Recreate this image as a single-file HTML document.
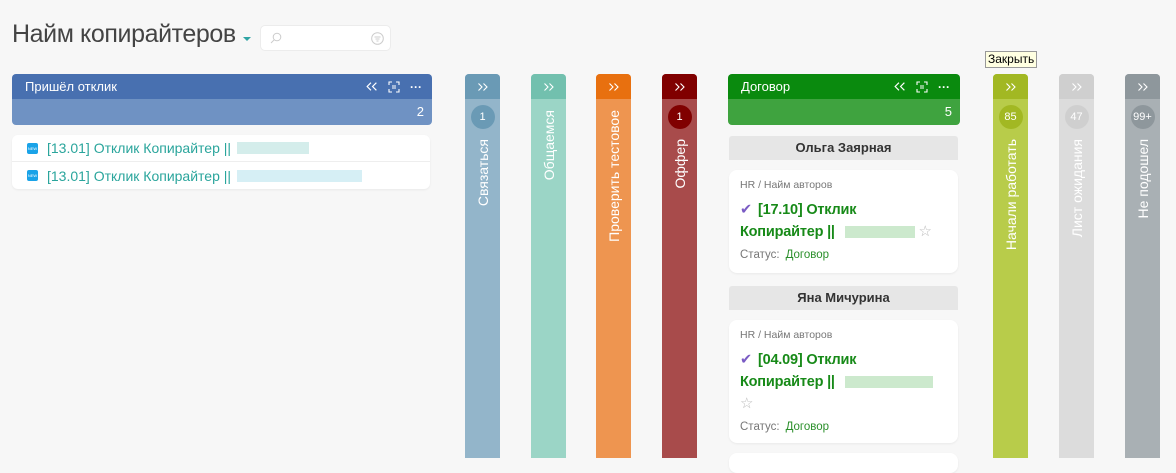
<!DOCTYPE html>
<html><head><meta charset="utf-8"><style>
*{box-sizing:border-box;margin:0;padding:0}
body{width:1176px;height:458px;overflow:hidden;background:#f7f7f7;font-family:"Segoe UI","Liberation Sans","DejaVu Sans",sans-serif;position:relative;color:#333}
.abs{position:absolute}
.title{left:12px;top:20px;font-size:25px;color:#444;letter-spacing:-0.4px}
.caret{left:243px;top:37px;width:0;height:0;border-left:4px solid transparent;border-right:4px solid transparent;border-top:4px solid #2fa4a4}
.search{left:260px;top:25px;width:131px;height:26px;background:#fff;border-radius:5px;border:1px solid #ececec}
.col{border-radius:4px 4px 0 0;overflow:hidden}
.hd{height:25px;color:#fff;font-size:13px;display:flex;align-items:center;padding:0 0 0 13px}
.sub{height:26px;color:#fff;font-size:13px;text-align:right;padding:5px 8px 0 0}
.icons{margin-left:auto;display:flex;gap:10px;align-items:center;padding-right:10px}
.cc{width:35px;top:74px;height:384px;border-radius:4px 4px 0 0;overflow:hidden}
.cc .h{height:25px;display:flex;align-items:center;justify-content:center}
.cc .circ{width:24px;height:24px;border-radius:50%;margin:6px auto 0;color:#fff;font-size:11px;text-align:center;line-height:24px}
.cc .vt{writing-mode:vertical-rl;transform:rotate(180deg);color:#fff;font-size:14px;margin:10px auto 0;white-space:nowrap}
.item{left:12px;width:418px;background:#fff}
.item div{height:27px;font-size:14px;color:#2aa59c;display:flex;align-items:center;padding-left:15px}
.new{width:11px;height:11px;background:#1aa3e8;border-radius:2px;margin-right:9px;color:#fff;font-size:4px;text-align:center;line-height:11px}
.blur{display:inline-block;height:12px;margin-left:6px;opacity:.45}
.person{left:729px;width:229px;height:24px;background:#e6e6e6;font-weight:bold;font-size:13px;text-align:center;line-height:24px;color:#333;border-radius:3px 3px 0 0}
.card{left:729px;width:229px;background:#fff;border-radius:8px;box-shadow:0 1px 2px rgba(0,0,0,.06);padding:9px 11px}
.card .p{font-size:10.5px;color:#777}
.card .t{font-size:14.5px;font-weight:bold;color:#178a18;line-height:22px;margin-top:8px;letter-spacing:-0.2px}
.card .s{font-size:11.5px;color:#777;margin-top:6px}
.card .s span{color:#2a8f2a;margin-left:6px}
.ck{color:#7a5bc4;margin-right:6px}
.star{color:#bbb;font-weight:normal;font-size:15px}
.nw{white-space:nowrap}
</style></head><body>
<svg width="0" height="0" style="position:absolute"><defs>
<symbol id="chev" viewBox="0 0 12 10"><path d="M1.5 1.5 5 5 1.5 8.5M6.5 1.5 10 5 6.5 8.5" fill="none" stroke="#fff" stroke-width="1.1"/></symbol>
<symbol id="chevl" viewBox="0 0 12 10"><path d="M5.5 1.5 2 5 5.5 8.5M10.5 1.5 7 5 10.5 8.5" fill="none" stroke="#fff" stroke-width="1.1"/></symbol>
<symbol id="fit" viewBox="0 0 12 12"><path d="M1 4V1h3M8 1h3v3M11 8v3H8M4 11H1V8M4 5h4M4 7h4" fill="none" stroke="#fff" stroke-width="1.1"/></symbol>
</defs></svg>
<div class="abs title">Найм копирайтеров</div>
<div class="abs caret"></div>
<div class="abs search">
<svg class="abs" style="left:9px;top:6px" width="12" height="12" viewBox="0 0 12 12"><circle cx="7" cy="5" r="3.8" fill="none" stroke="#ccc" stroke-width="1"/><path d="M4.2 7.8 1 11" stroke="#ccc"/></svg>
<svg class="abs" style="left:110px;top:6px" width="13" height="13" viewBox="0 0 13 13"><circle cx="6.5" cy="6.5" r="5.8" fill="none" stroke="#ccc"/><path d="M3.5 5h6M4.5 7h4M5.5 9h2" stroke="#ccc"/></svg>
</div>

<div class="abs col" style="left:12px;top:74px;width:420px;border-radius:4px">
<div class="hd" style="background:#4870b0">Пришёл отклик<span class="icons"><svg width="13" height="11"><use href="#chevl"/></svg><svg width="12" height="12"><use href="#fit"/></svg><span style="font-weight:bold;font-size:12px">···</span></span></div>
<div class="sub" style="background:#6f92c3">2</div>
</div>
<div class="abs item" style="top:135px;height:54px;border-radius:6px;box-shadow:0 1px 2px rgba(0,0,0,.06)">
<div style="border-bottom:1px solid #eee"><span class="new">NEW</span>[13.01] Отклик Копирайтер ||<span class="blur" style="width:72px;background:#9fd8d3"></span></div>
<div><span class="new">NEW</span>[13.01] Отклик Копирайтер ||<span class="blur" style="width:125px;background:#a5dbe8"></span></div>
</div>

<div class="abs cc" style="left:465px;background:#93b5ca"><div class="h" style="background:#6a9ab5"><svg width="12" height="10"><use href="#chev"/></svg></div><div class="circ" style="background:#6a9ab5">1</div><div class="vt">Связаться</div></div>
<div class="abs cc" style="left:531px;background:#9bd5c6"><div class="h" style="background:#72c0ae"><svg width="12" height="10"><use href="#chev"/></svg></div><div class="vt" style="margin-top:11px">Общаемся</div></div>
<div class="abs cc" style="left:596px;background:#ee9550"><div class="h" style="background:#e8700f"><svg width="12" height="10"><use href="#chev"/></svg></div><div class="vt" style="margin-top:11px">Проверить тестовое</div></div>
<div class="abs cc" style="left:662px;background:#a84b4b"><div class="h" style="background:#800000"><svg width="12" height="10"><use href="#chev"/></svg></div><div class="circ" style="background:#800000">1</div><div class="vt">Оффер</div></div>

<div class="abs col" style="left:728px;top:74px;width:232px;border-radius:4px">
<div class="hd" style="background:#0a8a0e">Договор<span class="icons"><svg width="13" height="11"><use href="#chevl"/></svg><svg width="12" height="12"><use href="#fit"/></svg><span style="font-weight:bold;font-size:12px">···</span></span></div>
<div class="sub" style="background:#3fa33f">5</div>
</div>
<div class="abs person" style="top:136px">Ольга Заярная</div>
<div class="abs card" style="top:170px;height:103px">
<div class="p">HR / Найм авторов</div>
<div class="t"><span class="ck">✔</span>[17.10] Отклик<br><span class="nw">Копирайтер || <span class="blur" style="width:70px;background:#8fcf90;vertical-align:middle"></span> <span class="star">☆</span></span></div>
<div class="s">Статус:<span>Договор</span></div>
</div>
<div class="abs person" style="top:286px">Яна Мичурина</div>
<div class="abs card" style="top:320px;height:123px">
<div class="p">HR / Найм авторов</div>
<div class="t"><span class="ck">✔</span>[04.09] Отклик<br><span class="nw">Копирайтер || <span class="blur" style="width:88px;background:#8fcf90;vertical-align:middle"></span></span><br><span class="star">☆</span></div>
<div class="s">Статус:<span>Договор</span></div>
</div>
<div class="abs card" style="top:453px;height:20px"></div>

<div class="abs" style="left:985px;top:51px;background:#ffffe1;border:1px solid #999;font-size:12px;padding:0 2px;color:#000;line-height:15px">Закрыть</div>
<div class="abs cc" style="left:993px;background:#b8cc4a"><div class="h" style="background:#a2b823"><svg width="12" height="10"><use href="#chev"/></svg></div><div class="circ" style="background:#a2b823">85</div><div class="vt">Начали работать</div></div>
<div class="abs cc" style="left:1059px;background:#dcdcdc"><div class="h" style="background:#cfcfcf"><svg width="12" height="10"><use href="#chev"/></svg></div><div class="circ" style="background:#cfcfcf">47</div><div class="vt">Лист ожидания</div></div>
<div class="abs cc" style="left:1125px;background:#a9b0b4"><div class="h" style="background:#8e979c"><svg width="12" height="10"><use href="#chev"/></svg></div><div class="circ" style="background:#8e979c">99+</div><div class="vt">Не подошел</div></div>
</body></html>
